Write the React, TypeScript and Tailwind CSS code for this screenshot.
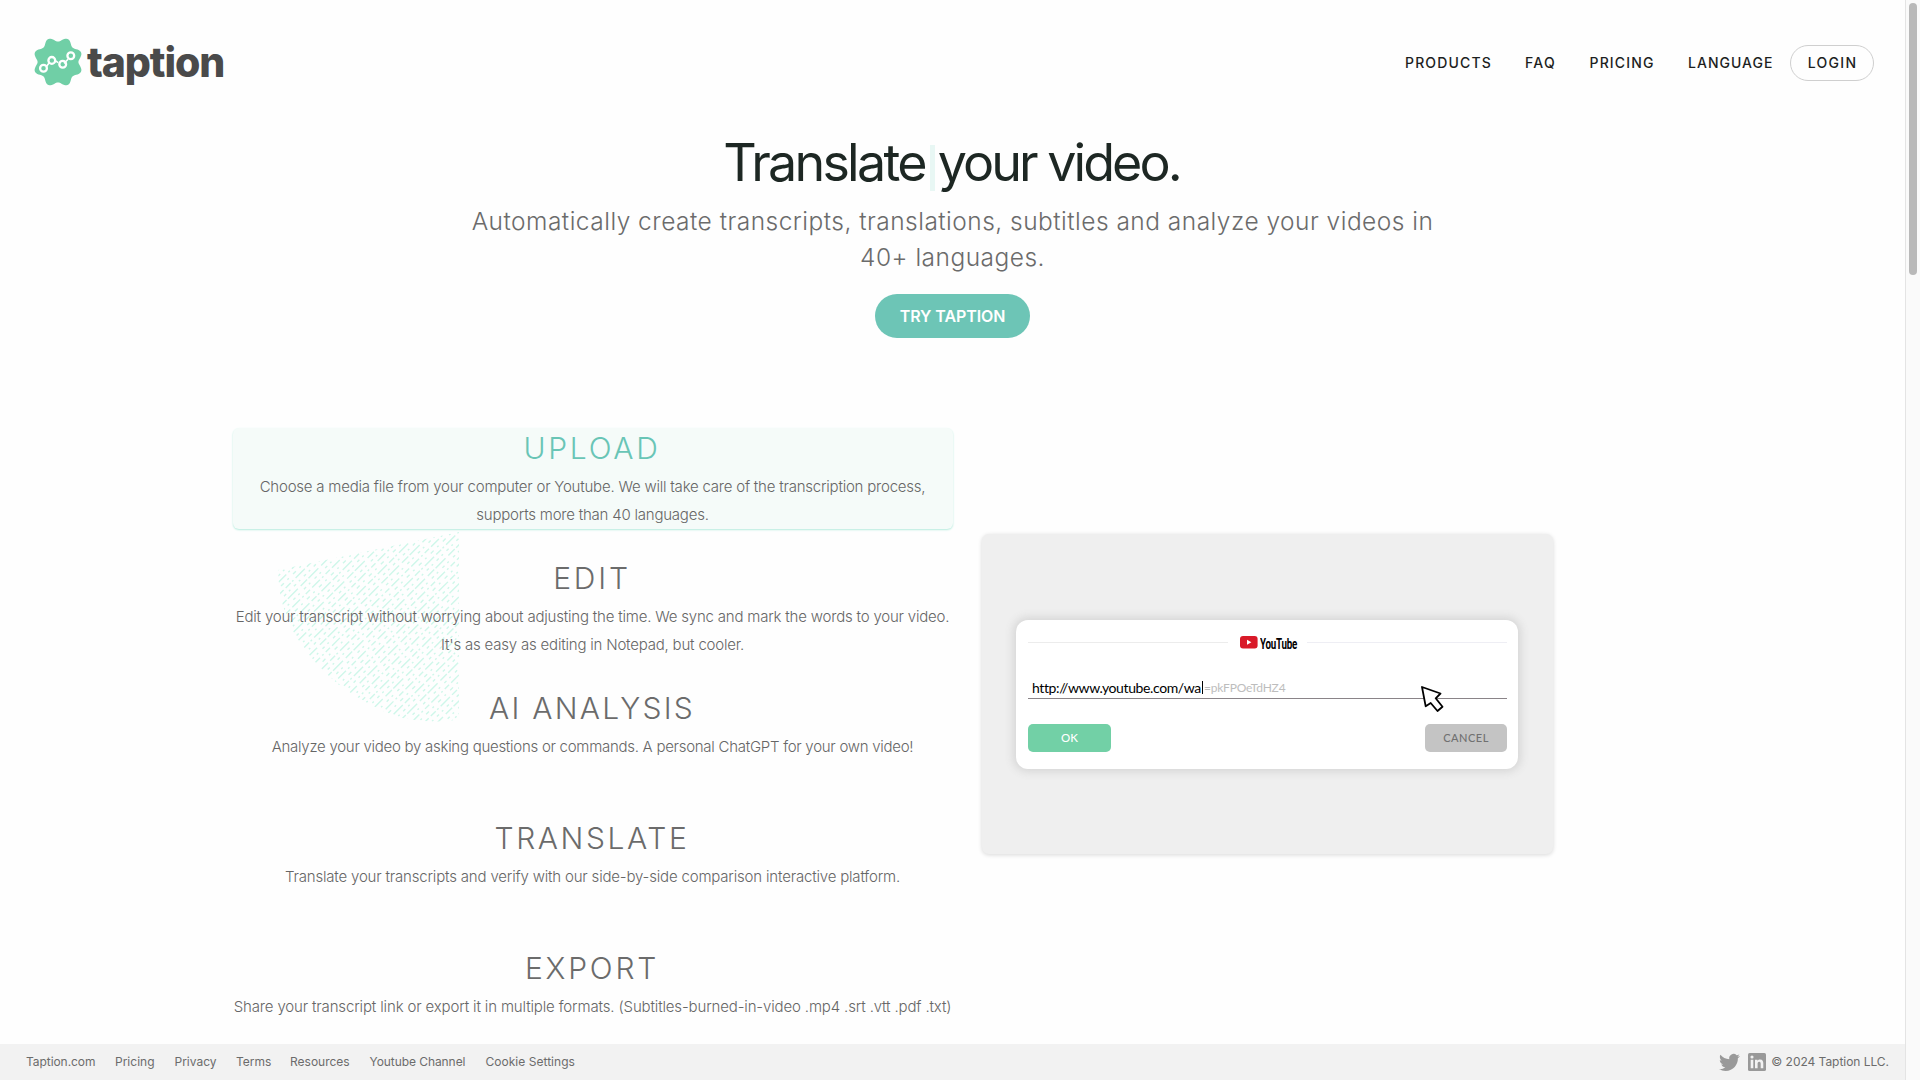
import React from 'react';

const badgePath = (() => {
  const pts: string[] = [];
  for (let i = 0; i < 144; i++) {
    const a = (i / 144) * Math.PI * 2;
    const r = 22.7 + 2.3 * Math.cos(8 * (a - Math.PI / 8));
    pts.push(`${(24 + r * Math.cos(a)).toFixed(2)} ${(24 + r * Math.sin(a)).toFixed(2)}`);
  }
  return `M${pts.join('L')}Z`;
})();

function Logo() {
  return (
    <a className="flex h-[56px] items-center">
      <svg width="48" height="48" viewBox="0 0 48 48" fill="none">
        <path d={badgePath} fill="#70cfa6" />
        <path d="M12.5 28.5 15.4 24.6M21.2 22.6 24.2 24.6M30 25.4 34 21.3" stroke="#fff" strokeWidth="1.6" />
        <g stroke="#fff" strokeWidth="2.3">
          <circle cx="9.5" cy="30.3" r="3.4" />
          <circle cx="17.8" cy="22.4" r="3.4" />
          <circle cx="28.7" cy="26.2" r="3.4" />
          <circle cx="36.8" cy="17.8" r="3.4" />
        </g>
      </svg>
      <span className="ml-[5px] text-[41px] leading-[48px] font-extrabold tracking-[-1.1px] text-[#4a4a4a]">taption</span>
    </a>
  );
}

const nav = [
  { label: 'PRODUCTS', cls: 'w-[120px] tracking-[1.15px]' },
  { label: 'FAQ', cls: 'w-[64.5px] tracking-[1.3px]' },
  { label: 'PRICING', cls: 'w-[98.5px] tracking-[1.15px]' },
  { label: 'LANGUAGE', cls: 'w-[102px] tracking-[1.02px]' },
];

function Header() {
  return (
    <header className="flex h-[132px] shrink-0 items-start justify-between pr-[31px] pl-[34px]">
      <div className="mt-[34px]"><Logo /></div>
      <nav className="mt-[45px] flex h-[36px] items-center text-[14px] font-medium text-[#1d1f1e]">
        {nav.map((n) => (
          <a key={n.label} className={'pb-[2px] ' + n.cls}>{n.label}</a>
        ))}
        <a className="flex h-[36px] w-[84px] items-center justify-center rounded-full border border-[#cfcfcf] pb-[2px] pl-px tracking-[1.3px]">LOGIN</a>
      </nav>
    </header>
  );
}

function Hero() {
  return (
    <section className="flex shrink-0 flex-col items-center pt-px">
      <h1 className="flex h-[60px] items-center pr-[2px] text-[52px] leading-[60px] text-[#1d2723]">
        <span className="tracking-[-2.75px]">Translate</span>
        <span className="mt-[9px] ml-[5px] h-[46px] w-[5px] bg-[#e8f7f4]" />
        <span className="ml-[3px] tracking-[-2.95px]">your video.</span>
      </h1>
      <p className="mt-[10px] text-center text-[24.5px] leading-[36px] font-light tracking-[0.475px] text-[#6b6b6b]">
        Automatically create transcripts, translations, subtitles and analyze your videos in
        <br />
        40+ languages.
      </p>
      <a className="mt-[19px] flex h-[44px] w-[155px] items-center justify-center rounded-full bg-[#6dc5b6] text-[16px] font-semibold tracking-[-0.1px] whitespace-nowrap text-white">
        TRY TAPTION
      </a>
    </section>
  );
}

const steps = [
  {
    title: 'UPLOAD', active: true, head: 'tracking-[2.75px]', body: 'tracking-[-0.217px]',
    lines: ['Choose a media file from your computer or Youtube. We will take care of the transcription process,', 'supports more than 40 languages.'],
  },
  {
    title: 'EDIT', head: 'tracking-[2.8px]', body: 'tracking-[-0.2px]',
    lines: ['Edit your transcript without worrying about adjusting the time. We sync and mark the words to your video.', "It's as easy as editing in Notepad, but cooler."],
  },
  {
    title: 'AI ANALYSIS', head: 'tracking-[2.3px]', body: 'tracking-[-0.27px]',
    lines: ['Analyze your video by asking questions or commands. A personal ChatGPT for your own video!'],
  },
  {
    title: 'TRANSLATE', head: 'tracking-[2.6px]', body: 'tracking-[-0.18px]',
    lines: ['Translate your transcripts and verify with our side-by-side comparison interactive platform.'],
  },
  {
    title: 'EXPORT', head: 'tracking-[2.8px]', body: 'tracking-[-0.147px]',
    lines: ['Share your transcript link or export it in multiple formats. (Subtitles-burned-in-video .mp4 .srt .vtt .pdf .txt)'],
  },
];

const dashes = ['13 3 7 2 2 3', '2 5 3 4', '9 2 14 4', '3 4 2 6', '6 3 11 3 2 3', '2 6 4 5'];

function Hatch() {
  return (
    <svg className="pointer-events-none absolute top-[101px] left-[44px]" width="184" height="194" viewBox="0 0 184 194">
      <clipPath id="fan">
        <path d="M1 41 182 3V190Q160 196 120 188 90 176 62 156 36 134 19 108 5 82 2 58Z" />
      </clipPath>
      <g clipPath="url(#fan)">
        <g transform="rotate(-45 92 97)" stroke="#cff7ea" strokeWidth="1.4">
          {Array.from({ length: 70 }, (_, i) => (
            <line key={i} x1={-60 - ((i * 7) % 17)} x2="250" y1={-44 + i * 4.6} y2={-44 + i * 4.6} strokeDasharray={dashes[i % 6]} />
          ))}
        </g>
      </g>
    </svg>
  );
}

function Steps() {
  return (
    <div className="relative w-[720px] text-center">
      <Hatch />
      <div className="relative flex flex-col gap-[29px]">
        {steps.map((s) => (
          <div
            key={s.title}
            className={'h-[101px] rounded-[6px] pr-px ' + (s.active ? 'bg-[#f5fbf9] shadow-[0_1px_2px_#b5ebdd]' : '')}
          >
            <h2 className={'pr-px text-[30px] leading-[40px] font-light ' + s.head + (s.active ? ' text-[#69c5b6]' : ' text-[#6b6b6b]')}>{s.title}</h2>
            <div className={'mt-[5px] text-[15px] leading-[28px] font-light whitespace-nowrap text-[#666] ' + s.body}>
              {s.lines.map((l) => (
                <p key={l} className="flex justify-center">{l}</p>
              ))}
            </div>
          </div>
        ))}
      </div>
    </div>
  );
}

function YouTubeMark() {
  return (
    <div className="flex h-[14px] w-[57px] items-center">
      <svg className="shrink-0" width="18" height="13" viewBox="0 0 18 13">
        <rect width="17.6" height="12.6" rx="3" fill="#d91a29" />
        <path d="M7 3.7V8.8L11.4 6.25Z" fill="#fff" />
      </svg>
      <span className="ml-[1.5px] w-[37px]">
        <span className="inline-block origin-left scale-x-[0.78] scale-y-[1.12] font-['Roboto'] text-[12.5px] leading-[14px] font-bold tracking-[-0.3px] text-black">YouTube</span>
      </span>
    </div>
  );
}

function Demo() {
  return (
    <div className="mt-[106px] flex h-[320px] w-[571px] items-center justify-center rounded-[7px] bg-[#efefef] pr-px shadow-[0_1px_4px_#d8d8d8]">
      <div className="relative flex h-[149px] w-[502px] flex-col rounded-[12px] bg-white pt-[16px] pr-[11px] pl-[12px] shadow-[0_0_8px_3px_#d6d6d6]">
        <div className="flex h-[14px] items-center">
          <div className="h-px w-[200px] bg-[#ececec]" />
          <div className="ml-[12px]"><YouTubeMark /></div>
          <div className="ml-[10px] h-px flex-1 bg-[#eeeef4]" />
        </div>
        <div className="mt-[27px] flex h-[22px] items-center border-b border-[#8a8488] pl-[4px] font-['Lato'] whitespace-nowrap">
          <span className="text-[14px] tracking-[-0.38px] text-black">http://www.youtube.com/wa</span>
          <span className="ml-px h-[13px] w-px bg-black" />
          <span className="ml-px pt-[2px] text-[12px] tracking-[-0.2px] text-[#bdbdbd]">=pkFPOeTdHZ4</span>
        </div>
        <div className="mt-[25px] flex justify-between font-['Lato'] text-[11px] font-medium">
          <span className="flex h-[28px] w-[83px] items-center justify-center rounded-[5px] bg-[#72d0a6] text-[11.5px] text-white">OK</span>
          <span className="flex h-[28px] w-[82px] items-center justify-center rounded-[5px] bg-[#c4c4c4] pt-px tracking-[0.5px] text-[#707070]">CANCEL</span>
        </div>
        <svg className="absolute top-[65px] left-[404px]" width="25" height="27" viewBox="0 0 25 27">
          <path d="M2 2 20.5 8.5Q17.5 11.5 15.7 13.3L22.5 21.7 17.5 26 10.7 18 5.7 21.3Z" fill="#fff" stroke="#000" strokeWidth="1.8" strokeLinejoin="round" />
        </svg>
      </div>
    </div>
  );
}

const links = [
  { label: 'Taption.com', cls: 'w-[89px] tracking-[-0.06px]' },
  { label: 'Pricing', cls: 'w-[59.5px]' },
  { label: 'Privacy', cls: 'w-[61.5px]' },
  { label: 'Terms', cls: 'w-[54px]' },
  { label: 'Resources', cls: 'w-[79.5px]' },
  { label: 'Youtube Channel', cls: 'w-[116px] tracking-[-0.07px]' },
  { label: 'Cookie Settings', cls: 'tracking-[0.03px]' },
];

function Footer() {
  return (
    <footer className="flex h-[36px] shrink-0 items-center justify-between bg-[#f2f2f2] pr-[16px] pl-[26px] text-[12px] text-[#6c6c6c]">
      <div className="flex">
        {links.map((l) => (
          <a key={l.label} className={'whitespace-nowrap ' + l.cls}>{l.label}</a>
        ))}
      </div>
      <div className="flex items-center">
        <svg width="21" height="21" viewBox="0 0 24 24" fill="#999">
          <path d="M23.953 4.57a10 10 0 01-2.825.775 4.958 4.958 0 002.163-2.723c-.951.555-2.005.959-3.127 1.184a4.92 4.92 0 00-8.384 4.482C7.69 8.095 4.067 6.13 1.64 3.162a4.822 4.822 0 00-.666 2.475c0 1.71.87 3.213 2.188 4.096a4.904 4.904 0 01-2.228-.616v.06a4.923 4.923 0 003.946 4.827 4.996 4.996 0 01-2.212.085 4.936 4.936 0 004.604 3.417 9.867 9.867 0 01-6.102 2.105c-.39 0-.779-.023-1.17-.067a13.995 13.995 0 007.557 2.209c9.053 0 13.998-7.496 13.998-13.985 0-.21 0-.42-.015-.63A9.935 9.935 0 0024 4.59z" />
        </svg>
        <svg className="ml-[8px]" width="18" height="18" viewBox="0 0 18 18">
          <rect width="18" height="18" rx="1.6" fill="#999" />
          <g fill="#f2f2f2">
            <circle cx="4" cy="4" r="1.55" />
            <path d="M2.7 6.8H5.3V15.3H2.7ZM7 6.8H9.5V8C10 7.1 11 6.6 12.1 6.6 14.7 6.6 15.3 8.3 15.3 10.6V15.3H12.7V11.1C12.7 10 12.6 8.8 11.2 8.8S9.6 9.9 9.6 11V15.3H7Z" />
          </g>
        </svg>
        <span className="ml-[5px] tracking-[-0.04px]">© 2024 Taption LLC.</span>
      </div>
    </footer>
  );
}

export default function App() {
  return (
    <div className="flex h-[1080px] w-[1920px] overflow-hidden bg-[#fefefe] font-['Inter',sans-serif]">
      <div className="flex w-[1905px] flex-col">
        <Header />
        <Hero />
        <main className="mt-[90px] flex min-h-0 flex-1 items-start gap-[29px] pl-[233px]">
          <Steps />
          <Demo />
        </main>
        <Footer />
      </div>
      <div className="w-[15px] border-l border-[#e4e4e4] bg-[#fafafa] pt-[3px] pl-[3px]">
        <div className="h-[272px] w-[8px] rounded-full bg-[#b9b9b9]" />
      </div>
    </div>
  );
}
